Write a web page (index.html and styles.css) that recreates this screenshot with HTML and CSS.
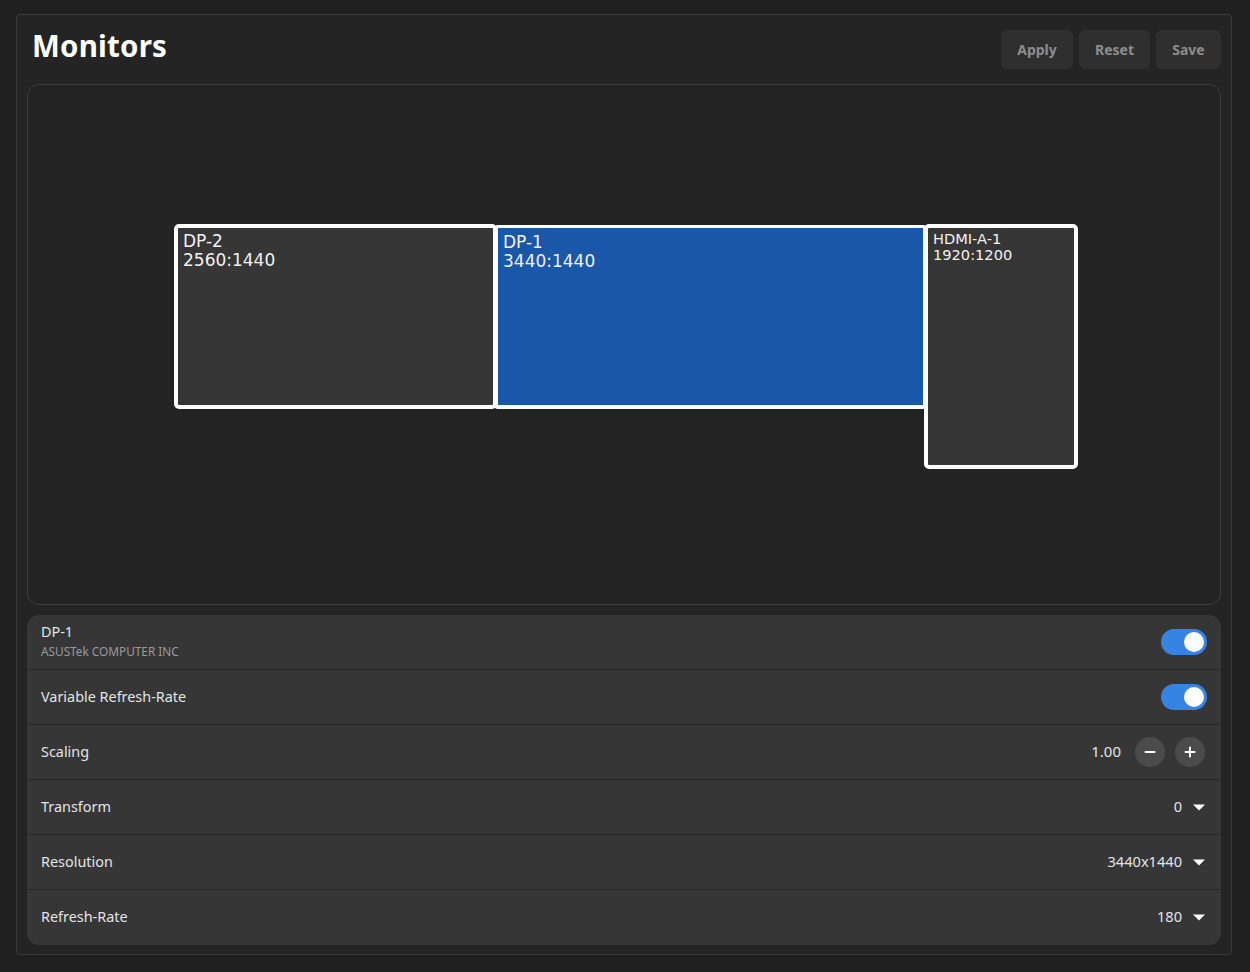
FILE: index.html
```html
<!DOCTYPE html>
<html>
<head>
<meta charset="utf-8">
<link rel="stylesheet" href="styles.css">
</head>
<body>
<div class="frame">
  <header class="header">
    <h1 class="title">Monitors</h1>
    <div class="actions">
      <button class="btn btn-apply">Apply</button>
      <button class="btn btn-reset">Reset</button>
      <button class="btn btn-save">Save</button>
    </div>
  </header>
  <div class="canvas">
    <div class="mon mon-dp2" style="left:146px;top:139px;width:323px;height:185px;">
      <div class="mon-name">DP-2</div>
      <div class="mon-res">2560:1440</div>
    </div>
    <div class="mon mon-hdmi small" style="left:896px;top:139px;width:154px;height:245px;">
      <div class="mon-name">HDMI-A-1</div>
      <div class="mon-res">1920:1200</div>
    </div>
    <div class="mon mon-dp1 selected" style="left:466px;top:140px;width:433px;height:184px;">
      <div class="mon-name">DP-1</div>
      <div class="mon-res">3440:1440</div>
    </div>
  </div>
  <div class="list">
    <div class="row">
      <div class="row-label">
        <div class="row-title">DP-1</div>
        <div class="row-sub">ASUSTek COMPUTER INC</div>
      </div>
      <div class="switch on"><span class="knob"></span></div>
    </div>
    <div class="row">
      <div class="row-title">Variable Refresh-Rate</div>
      <div class="switch on"><span class="knob"></span></div>
    </div>
    <div class="row">
      <div class="row-title">Scaling</div>
      <div class="spin">
        <span class="value">1.00</span>
        <button class="circle" aria-label="decrease">
          <svg width="12" height="12" viewBox="0 0 12 12"><path d="M1.5 6h9" stroke="#fff" stroke-width="2" stroke-linecap="round"/></svg>
        </button>
        <button class="circle" aria-label="increase">
          <svg width="12" height="12" viewBox="0 0 12 12"><path d="M1.5 6h9M6 1.5v9" stroke="#fff" stroke-width="2" stroke-linecap="round"/></svg>
        </button>
      </div>
    </div>
    <div class="row">
      <div class="row-title">Transform</div>
      <div class="dropdown"><span class="value">0</span><svg class="arrow" width="12" height="7" viewBox="0 0 12 7"><path d="M0 0.5h12L6 6.5z" fill="#fff"/></svg></div>
    </div>
    <div class="row">
      <div class="row-title">Resolution</div>
      <div class="dropdown"><span class="value">3440x1440</span><svg class="arrow" width="12" height="7" viewBox="0 0 12 7"><path d="M0 0.5h12L6 6.5z" fill="#fff"/></svg></div>
    </div>
    <div class="row">
      <div class="row-title">Refresh-Rate</div>
      <div class="dropdown"><span class="value">180</span><svg class="arrow" width="12" height="7" viewBox="0 0 12 7"><path d="M0 0.5h12L6 6.5z" fill="#fff"/></svg></div>
    </div>
  </div>
</div>
</body>
</html>
```
FILE: styles.css
```css
* { box-sizing: border-box; }
html, body {
  margin: 0;
  padding: 0;
  background: #202020;
  width: 1250px;
  height: 972px;
  overflow: hidden;
  font-family: "Noto Sans", "Open Sans", sans-serif;
  color: #e2e2e2;
}
.frame {
  margin: 14px 0 0 16px;
  width: 1216px;
  height: 941px;
  border: 1px solid #3b3b3b;
  border-radius: 4px;
  background: #242424;
  padding: 15px 10px 9px 10px;
  display: flex;
  flex-direction: column;
}
.header {
  display: flex;
  justify-content: space-between;
  align-items: flex-start;
  height: 39px;
  margin-bottom: 15px;
}
.title {
  margin: -3px 0 0 5px;
  font-size: 29.5px;
  font-weight: 700;
  color: #ffffff;
  line-height: 38px;
  letter-spacing: 0.2px;
}
.actions {
  display: flex;
  gap: 6px;
}
.btn {
  height: 39px;
  border: none;
  border-radius: 6px;
  background: #2f2f2f;
  color: #8d8d8d;
  font-family: "Noto Sans", sans-serif;
  font-size: 14px;
  font-weight: 700;
  padding: 0;
}
.btn-apply { width: 72px; }
.btn-reset { width: 71px; }
.btn-save { width: 65px; }
.canvas {
  position: relative;
  height: 521px;
  border: 1px solid #3d3d3d;
  border-radius: 12px;
  background: #232323;
  margin-bottom: 10px;
}
.mon {
  position: absolute;
  border: 4px solid #ffffff;
  border-radius: 5px;
  background: #363636;
  padding: 4px 5px;
  font-family: "DejaVu Sans", sans-serif;
  font-size: 17px;
  line-height: 19px;
  color: #f2f2f2;
}
.mon.selected {
  background: #1a57a9;
  border-top-width: 3px;
  border-radius: 4px;
  padding-top: 5px;
}
.mon.small {
  font-size: 14.6px;
  line-height: 15.5px;
  padding-top: 3px;
}
.list {
  flex: 1;
  background: #363636;
  border-radius: 12px;
  display: flex;
  flex-direction: column;
  overflow: hidden;
}
.row {
  height: 55px;
  display: flex;
  align-items: center;
  justify-content: space-between;
  padding: 0 14px;
  border-top: 1px solid #282828;
}
.row:first-child { border-top: none; height: 54px; }
.row-title {
  font-size: 14.4px;
  color: #e4e4e4;
  margin-top: -2px;
}
.row-label {
  display: flex;
  flex-direction: column;
  margin-top: -2px;
}
.row-label .row-title { margin-top: 0; line-height: 18px; }
.row-sub {
  font-size: 11.8px;
  color: #9a9a9a;
  margin-top: 3px;
  line-height: 15px;
  letter-spacing: 0;
}
.switch {
  width: 46px;
  height: 26px;
  border-radius: 13px;
  background: #3584e4;
  position: relative;
}
.knob {
  position: absolute;
  right: 3px;
  top: 3px;
  width: 20px;
  height: 20px;
  border-radius: 50%;
  background: #ffffff;
}
.spin {
  display: flex;
  align-items: center;
  margin-right: 2px;
}
.spin .value { margin-right: 14px; font-size: 15px; color: #e4e4e4; margin-top: -2px; }
.circle {
  width: 30px;
  height: 30px;
  border-radius: 50%;
  border: none;
  background: #4b4b4b;
  padding: 0;
  display: flex;
  align-items: center;
  justify-content: center;
}
.circle + .circle { margin-left: 10px; }
.dropdown {
  display: flex;
  align-items: center;
  margin-right: 2px;
}
.dropdown .value { font-size: 14.6px; color: #e4e4e4; margin-right: 11px; margin-top: -2px; }
.arrow { display: block; margin-top: 0; }
```
